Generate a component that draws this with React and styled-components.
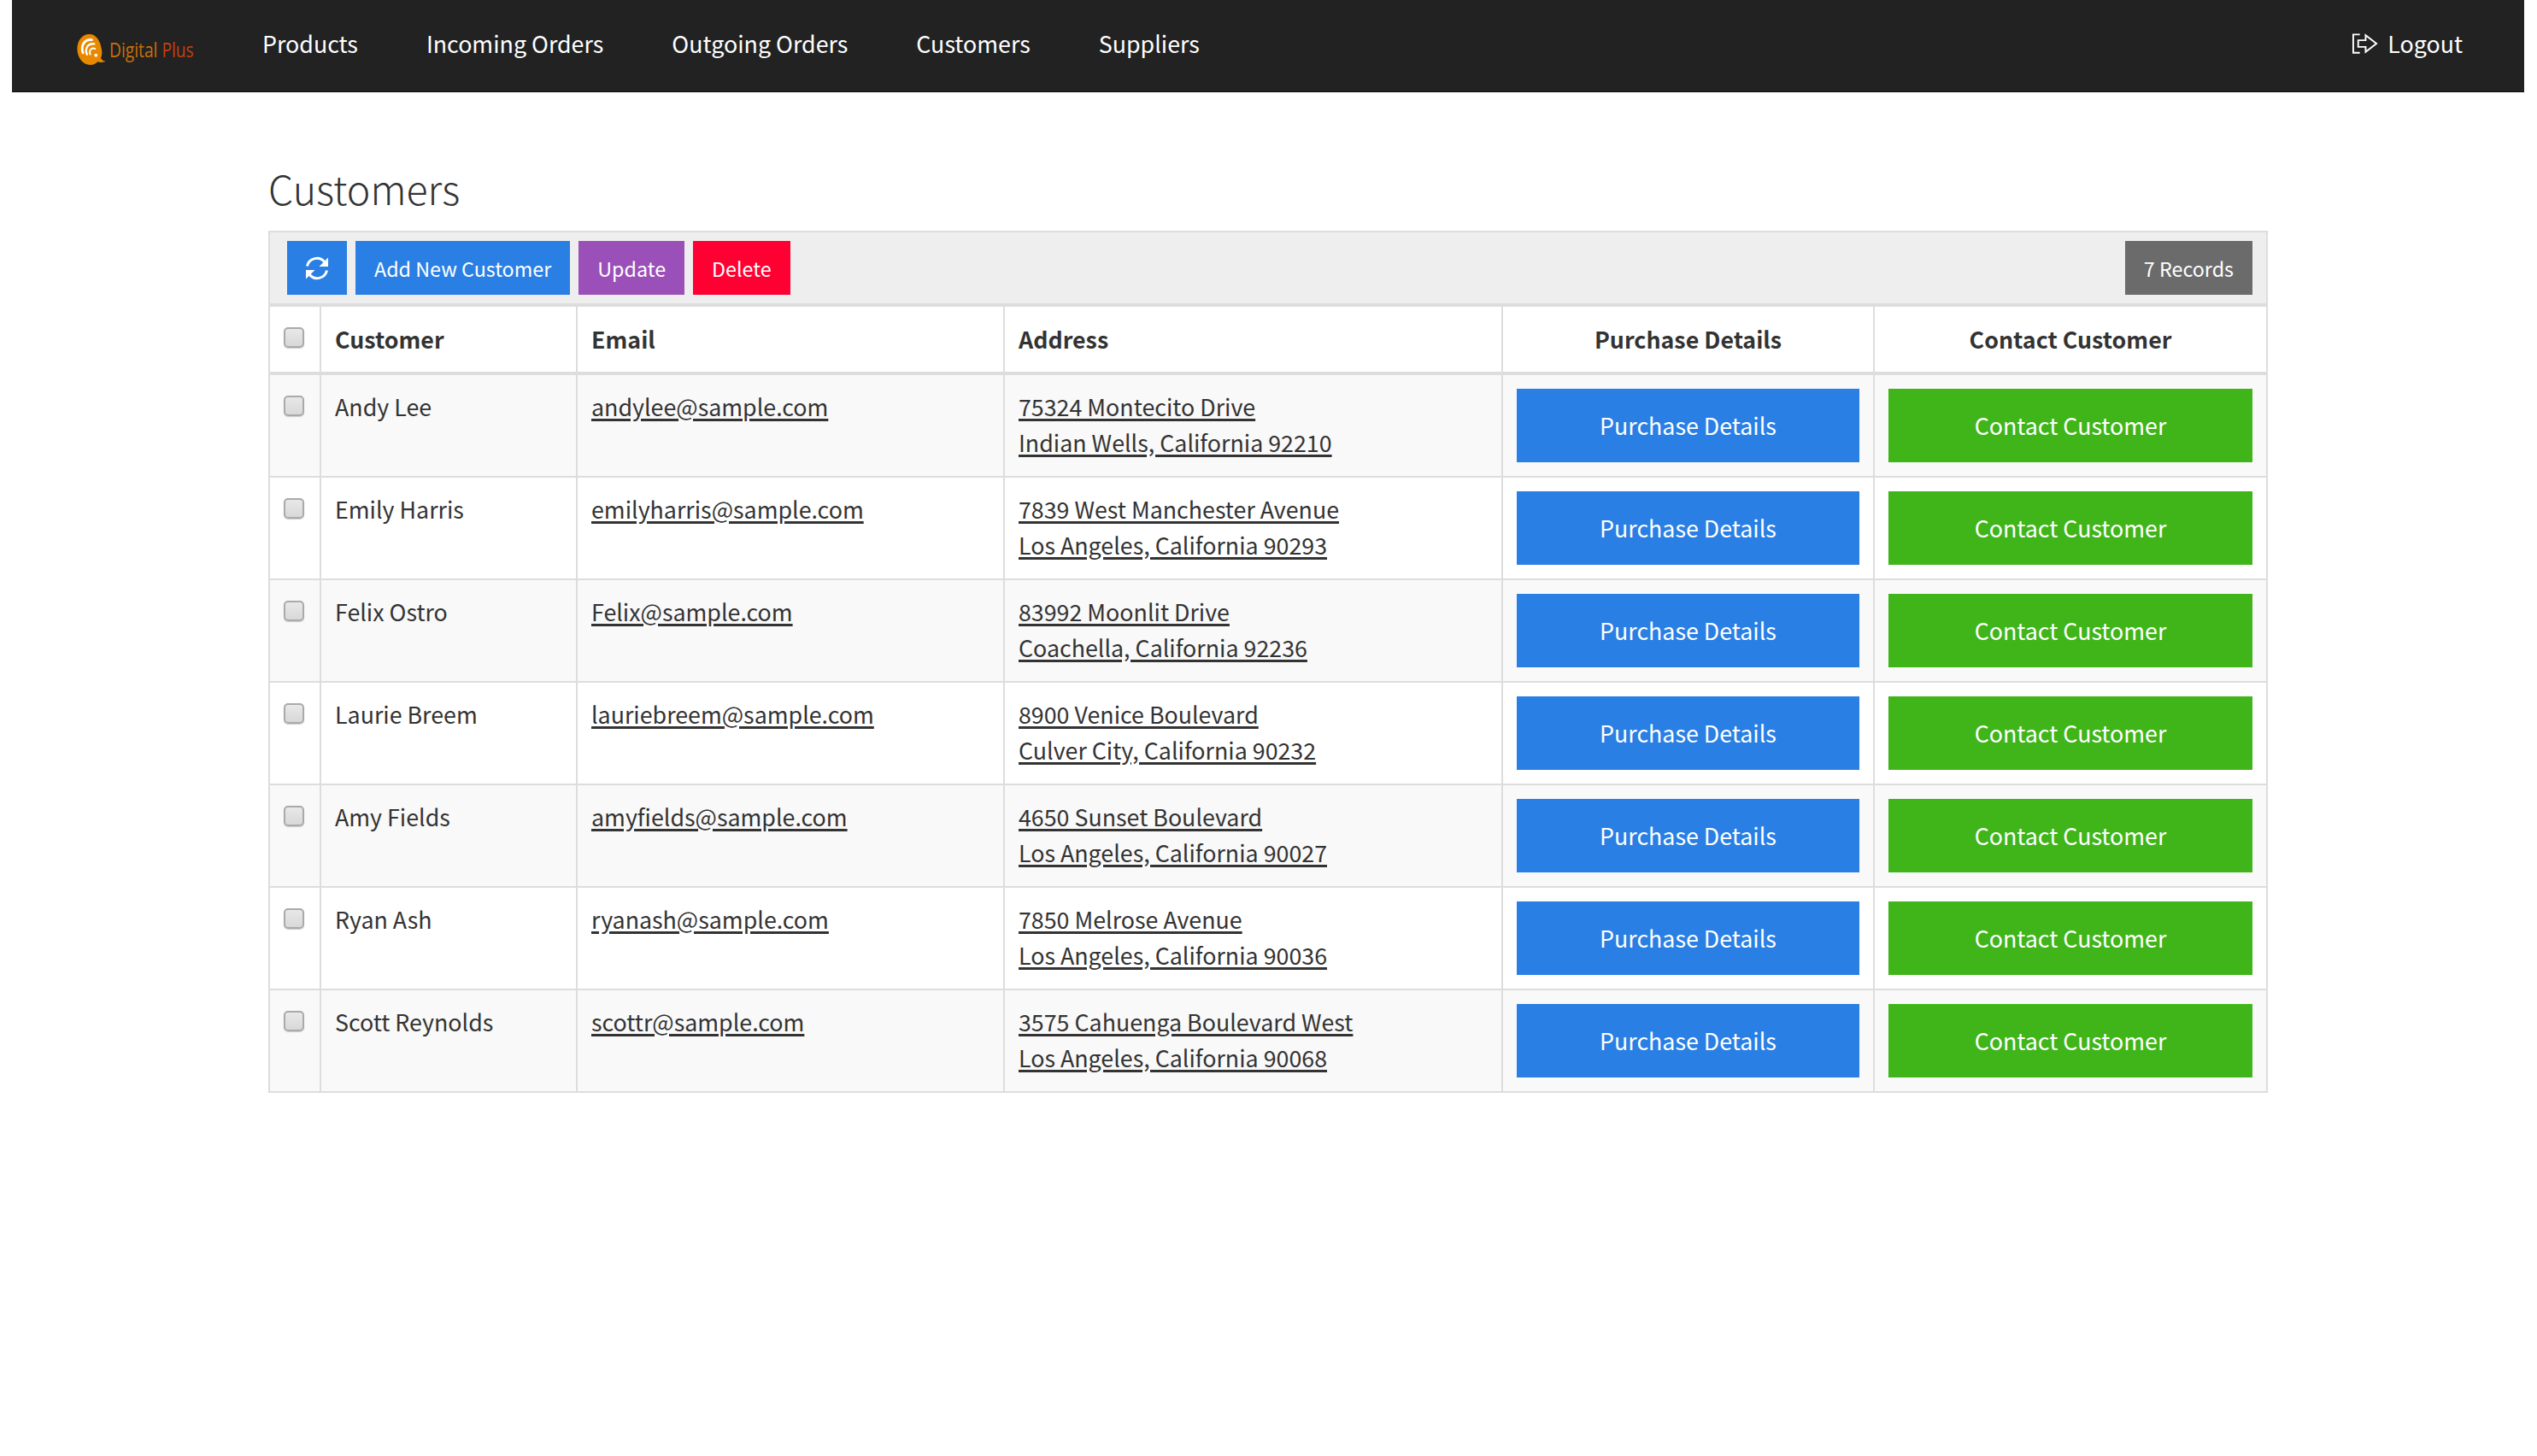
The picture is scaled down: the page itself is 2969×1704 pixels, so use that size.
import React from 'react';
import styled, { createGlobalStyle } from 'styled-components';

const fontStack = '"Noto Sans CJK SC", "Noto Sans", sans-serif';

const customers = [
    { name: 'Andy Lee', email: 'andylee@sample.com', street: '75324 Montecito Drive', city: 'Indian Wells, California 92210' },
    { name: 'Emily Harris', email: 'emilyharris@sample.com', street: '7839 West Manchester Avenue', city: 'Los Angeles, California 90293' },
    { name: 'Felix Ostro', email: 'Felix@sample.com', street: '83992 Moonlit Drive', city: 'Coachella, California 92236' },
    { name: 'Laurie Breem', email: 'lauriebreem@sample.com', street: '8900 Venice Boulevard', city: 'Culver City, California 90232' },
    { name: 'Amy Fields', email: 'amyfields@sample.com', street: '4650 Sunset Boulevard', city: 'Los Angeles, California 90027' },
    { name: 'Ryan Ash', email: 'ryanash@sample.com', street: '7850 Melrose Avenue', city: 'Los Angeles, California 90036' },
    { name: 'Scott Reynolds', email: 'scottr@sample.com', street: '3575 Cahuenga Boulevard West', city: 'Los Angeles, California 90068' },
];

const navLinks = ['Products', 'Incoming Orders', 'Outgoing Orders', 'Customers', 'Suppliers'];

const GlobalStyle = createGlobalStyle`
  html, body {
    margin: 0;
    background: #fff;
  }
  body {
    padding: 0 15px 0 14px;
    font-family: ${fontStack};
    font-size: 26.8px;
    line-height: 41.5px;
    color: #333;
  }
`;

const Navbar = styled.nav`
  display: flex;
  align-items: center;
  height: 107px;
  padding: 0 72px 0 76px;
  background: #222;
  border-bottom: 1px solid #111;
  box-sizing: content-box;
`;

const Logo = styled.div`
  display: flex;
  align-items: flex-end;
  gap: 3px;
  width: 217px;
  margin-top: 5px;
`;

const LogoLabel = styled.span`
  display: inline-block;
  transform: scaleX(0.8);
  transform-origin: left center;
  white-space: nowrap;
`;

const LogoText = styled.span`
  font-family: "Open Sans", sans-serif;
  font-size: 24px;
  line-height: 30px;
  color: ${(p) => p.$color};
`;

const NavLinks = styled.div`
  display: flex;
  gap: 80px;
  flex: 1;
  margin-top: -5px;
`;

const NavLink = styled.a`
  color: #fff;
  font-size: 26.8px;
  line-height: 41.5px;
  white-space: nowrap;
`;

const LogoutLink = styled(NavLink)`
  display: flex;
  align-items: center;
  gap: 11px;
  margin-top: -5px;
`;

const Content = styled.main`
  width: 2340px;
  margin: 0 auto;
`;

const Title = styled.h1`
  margin: 0;
  padding: 84px 0 22px;
  font-size: 46.5px;
  line-height: 56px;
  font-weight: 200;
  color: #333;
`;

const Panel = styled.section`
  border: 2px solid #ddd;
`;

const Toolbar = styled.div`
  display: flex;
  align-items: center;
  gap: 10px;
  height: 83px;
  padding: 0 16px 0 20px;
  background: #eee;
  border-bottom: 4px solid #ddd;
  box-sizing: content-box;
`;

const ToolButton = styled.button`
  display: flex;
  align-items: center;
  justify-content: center;
  height: 63px;
  padding: 0 22px;
  border: 0;
  background: ${(p) => p.$bg};
  color: #fff;
  font-family: ${fontStack};
  font-size: 23.3px;
  line-height: 30px;
  white-space: nowrap;
`;

const RefreshButton = styled(ToolButton)`
  padding: 0 21px;
`;

const RecordCount = styled(ToolButton).attrs({ as: 'div' })`
  margin-left: auto;
`;

const Table = styled.table`
  width: 100%;
  table-layout: fixed;
  border-collapse: separate;
  border-spacing: 0;
`;

const HeadCell = styled.th`
  width: ${(p) => p.$width}px;
  height: 80px;
  padding: 0 16px;
  text-align: ${(p) => (p.$center ? 'center' : 'left')};
  font-weight: 700;
  border-right: 2px solid #ddd;
  border-bottom: 4px solid #ddd;
  box-sizing: border-box;
  &:last-child {
    border-right: 0;
  }
`;

const Row = styled.tr`
  background: ${(p) => (p.$odd ? '#f9f9f9' : '#fff')};
  &:last-child td {
    border-bottom: 0;
  }
`;

const Cell = styled.td`
  padding: 16px;
  vertical-align: top;
  border-right: 2px solid #ddd;
  border-bottom: 2px solid #ddd;
  &:last-child {
    border-right: 0;
  }
`;

const CheckCell = styled(Cell)`
  padding-top: 24px;
`;

const HeadCheckCell = styled(HeadCell)`
  vertical-align: top;
  padding-top: 24px;
`;

const Check = styled.input.attrs({ type: 'checkbox' })`
  appearance: none;
  display: block;
  width: 24px;
  height: 24px;
  margin: 0;
  border: 2px solid #aaa;
  border-radius: 5px;
  background: linear-gradient(#e8e8e8, #d8d8d8);
  box-shadow: 0 1px 1px #ccc;
`;

const TextLink = styled.a`
  color: #333;
  text-decoration: underline;
  text-decoration-thickness: 2.5px;
  text-underline-offset: 3px;
`;

const RowButton = styled.button`
  display: block;
  width: 100%;
  height: 86px;
  padding: 0 0 2px;
  border: 0;
  background: ${(p) => p.$bg};
  color: #fff;
  font-family: ${fontStack};
  font-size: 26.8px;
`;

const RefreshIcon = () => (
    <svg width="28" height="28" viewBox="0 0 28 28" fill="none">
        <path d="M2.5 11.5A11.5 11.5 0 0 1 23 7" stroke="#fff" strokeWidth="3" />
        <path d="M27 1.5V12H16.5z" fill="#fff" />
        <path d="M25.5 16.5A11.5 11.5 0 0 1 5 21" stroke="#fff" strokeWidth="3" />
        <path d="M1 26.5V16h10.5z" fill="#fff" />
    </svg>
);

const LogoutIcon = () => (
    <svg width="31" height="26" viewBox="0 0 32 26" fill="none" stroke="#fff" strokeWidth="2">
        <path d="M10 2H2v22h8" />
        <path d="M8 9h9V3l13 10-13 10v-6H8z" strokeLinejoin="miter" />
    </svg>
);

const LogoMark = () => (
    <svg width="35" height="38" viewBox="0 0 36 40">
        <path
            d="M15 1C6 1 0 9 0 19c0 11 7 20 16 20 4 0 7-1.500 9-4 3 1 7 1 10-.5-3-.5-5-2-6-4 1.500-3 2-7 1-11C28.500 9 23 1 15 1z"
            fill="#e88800"
        />
        <g fill="none" stroke="#fff" strokeLinecap="round">
            <path d="M7 24C4 15 9 7 18 8" strokeWidth="3" />
            <path d="M12 26C9 19 13 12 21 13" strokeWidth="2.500" />
            <path d="M16 26C14 22 17 17 22 19" strokeWidth="2" />
        </g>
        <circle cx="23" cy="27" r="2" fill="#fff" />
    </svg>
);

export default function App() {
    return (
        <>
            <GlobalStyle />
            <Navbar>
                <Logo>
                    <LogoMark />
                    <LogoLabel>
                        <LogoText $color="#c96f0a">Digital </LogoText>
                        <LogoText $color="#c8400c">Plus</LogoText>
                    </LogoLabel>
                </Logo>
                <NavLinks>
                    {navLinks.map((link) => (
                        <NavLink key={link}>{link}</NavLink>
                    ))}
                </NavLinks>
                <LogoutLink>
                    <LogoutIcon />
                    Logout
                </LogoutLink>
            </Navbar>
            <Content>
                <Title>Customers</Title>
                <Panel>
                    <Toolbar>
                        <RefreshButton $bg="#2a7fe4" aria-label="Refresh">
                            <RefreshIcon />
                        </RefreshButton>
                        <ToolButton $bg="#2a7fe4">Add New Customer</ToolButton>
                        <ToolButton $bg="#9a50b8">Update</ToolButton>
                        <ToolButton $bg="#ff0033">Delete</ToolButton>
                        <RecordCount $bg="#6b6b6b">7 Records</RecordCount>
                    </Toolbar>
                    <Table>
                        <thead>
                            <tr>
                                <HeadCheckCell $width={60}><Check /></HeadCheckCell>
                                <HeadCell $width={300}>Customer</HeadCell>
                                <HeadCell $width={500}>Email</HeadCell>
                                <HeadCell $width={583}>Address</HeadCell>
                                <HeadCell $width={435} $center>Purchase Details</HeadCell>
                                <HeadCell $width={458} $center>Contact Customer</HeadCell>
                            </tr>
                        </thead>
                        <tbody>
                            {customers.map((c, i) => (
                                <Row key={c.email} $odd={i % 2 === 0}>
                                    <CheckCell><Check /></CheckCell>
                                    <Cell>{c.name}</Cell>
                                    <Cell><TextLink>{c.email}</TextLink></Cell>
                                    <Cell>
                                        <TextLink>{c.street}</TextLink>
                                        <br />
                                        <TextLink>{c.city}</TextLink>
                                    </Cell>
                                    <Cell><RowButton $bg="#2a7fe4">Purchase Details</RowButton></Cell>
                                    <Cell><RowButton $bg="#3fb51a">Contact Customer</RowButton></Cell>
                                </Row>
                            ))}
                        </tbody>
                    </Table>
                </Panel>
            </Content>
        </>
    );
}
